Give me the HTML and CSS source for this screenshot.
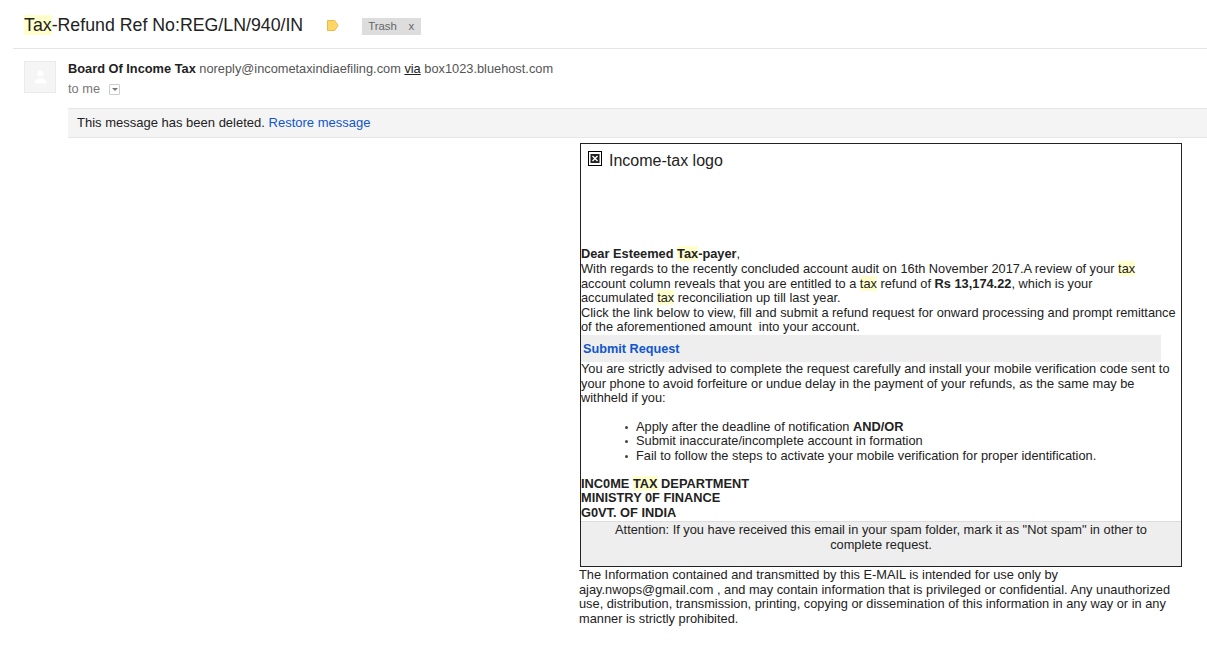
FILE: index.html
```html
<!DOCTYPE html>
<html lang="en">
<head>
<meta charset="utf-8">
<title>Tax-Refund Ref No:REG/LN/940/IN</title>
<link rel="stylesheet" href="styles.css">
</head>
<body>
<header class="subject">
  <h1 class="subject-title"><mark class="hl">Tax</mark>-Refund Ref No:REG/LN/940/IN</h1>
  <svg class="label-icon" width="13" height="11" viewBox="0 0 13 11"><path d="M1.500 .5h7.200l3.300 5-3.300 5H1.500z" fill="#fdd663" stroke="#efb94a"/></svg>
  <span class="trash-tag"><span>Trash</span><span>x</span></span>
</header>
<section class="sender">
  <div class="avatar">
    <svg width="13" height="14" viewBox="0 0 13 14"><circle cx="6.500" cy="3.500" r="3" fill="#fff"/><path d="M.5 13.500c0-3.500 2.500-5 6-5s6 1.500 6 5z" fill="#fff"/></svg>
  </div>
  <div class="sender-text">
    <div class="sender-line"><b class="sender-name">Board Of Income Tax</b> noreply@incometaxindiaefiling.com <u class="via">via</u> box1023.bluehost.com</div>
    <div class="to-line">to me <span class="to-menu"><svg width="6" height="3" viewBox="0 0 6 3"><path d="M0 0h6L3 3z" fill="#777"/></svg></span></div>
  </div>
</section>
<div class="notice">This message has been deleted. <a class="restore" href="#">Restore message</a></div>
<main class="message">
  <div class="mail-box">
    <div class="logo">
      <svg class="broken" width="14" height="15" viewBox="0 0 14 15"><rect x=".5" y=".5" width="13" height="14" fill="#fff" stroke="#000"/><rect x="2.500" y="3" width="9" height="9" fill="#222"/><path d="M4.500 5l5 5M9.500 5l-5 5" stroke="#fff" stroke-width="1.400"/></svg>
      <span class="logo-alt">Income-tax logo</span>
    </div>
    <div class="mail-text">
      <b>Dear Esteemed <mark class="hl">Tax</mark>-payer</b>,<br>
      With regards to the recently concluded account audit on 16th November 2017.A review of your <mark class="hl">tax</mark><br>
      account column reveals that you are entitled to a <mark class="hl">tax</mark> refund of <b>Rs 13,174.22</b>, which is your<br>
      accumulated <mark class="hl">tax</mark> reconciliation up till last year.<br>
      Click the link below to view, fill and submit a refund request for onward processing and prompt remittance<br>
      of the aforementioned amount&nbsp; into your account.
    </div>
    <div class="submit-bar"><a class="submit-link" href="#">Submit Request</a></div>
    <div class="mail-text">
      You are strictly advised to complete the request carefully and install your mobile verification code sent to<br>
      your phone to avoid forfeiture or undue delay in the payment of your refunds, as the same may be<br>
      withheld if you:
    </div>
    <ul class="mail-list">
      <li>Apply after the deadline of notification&nbsp;<b>AND/OR</b></li>
      <li>Submit inaccurate/incomplete account in formation</li>
      <li>Fail to follow the steps to activate your mobile verification for proper identification.</li>
    </ul>
    <div class="mail-text dept">
      INC0ME <mark class="hl">TAX</mark> DEPARTMENT<br>
      MINISTRY 0F FINANCE<br>
      G0VT. OF INDIA
    </div>
    <div class="attention">Attention: If you have received this email in your spam folder, mark it as "Not spam" in other to<br>complete request.</div>
  </div>
  <p class="disclaimer">The Information contained and transmitted by this E-MAIL is intended for use only by<br>
  ajay.nwops@gmail.com , and may contain information that is privileged or confidential. Any unauthorized<br>
  use, distribution, transmission, printing, copying or dissemination of this information in any way or in any<br>
  manner is strictly prohibited.</p>
</main>
</body>
</html>
```
FILE: styles.css
```css
html, body { margin: 0; padding: 0; background: #fff; }
body { font-family: "Liberation Sans", Arial, sans-serif; color: #222; overflow: hidden; }
.hl { background: #ffffcc; color: inherit; }
.subject { display: flex; align-items: center; height: 46px; margin-left: 13px; padding: 2px 0 0 11px; border-bottom: 1px solid #e5e5e5; }
.subject-title { margin: 0; font-size: 17.750px; font-weight: 400; line-height: 24px; }
.label-icon { margin-left: 23px; }
.trash-tag { display: flex; justify-content: space-between; width: 59px; height: 17px; margin: 2px 0 0 23px; padding: 0 7px 0 6px; box-sizing: border-box; background: #ddd; color: #666; font-size: 11.400px; line-height: 17px; }
.sender { display: flex; margin-top: 12px; margin-left: 24px; }
.avatar { display: flex; align-items: center; justify-content: center; width: 32px; height: 32px; box-sizing: border-box; background: #f5f5f5; border: 1px solid #ebebeb; }
.sender-text { margin-left: 12px; }
.sender-line { font-size: 12.800px; line-height: 16px; color: #555; }
.sender-name { color: #222; }
.via { color: #222; }
.to-line { display: flex; align-items: center; margin-top: 4px; font-size: 12.800px; line-height: 16px; color: #777; }
.to-menu { display: flex; align-items: center; justify-content: center; width: 9px; height: 9px; margin-left: 9px; border: 1px solid #ccc; border-radius: 1px; }
.notice { height: 28px; margin: 11px 0 0 68px; padding-left: 9px; background: #f4f4f4; border-top: 1px solid #e6e6e6; border-bottom: 1px solid #e6e6e6; font-size: 13px; line-height: 27px; }
.restore { color: #1155cc; text-decoration: none; }
.message { margin-left: 579px; width: 603px; margin-top: 5px; }
.mail-box { width: 602px; height: 424px; margin-left: 1px; box-sizing: border-box; border: 1px solid #222; display: flex; flex-direction: column; }
.logo { display: flex; align-items: flex-start; height: 103.400px; padding: 7px 0 0 7px; box-sizing: border-box; flex: none; }
.logo-alt { margin-left: 7px; font-size: 16px; line-height: 19px; }
.mail-text { font-size: 12.800px; line-height: 14.600px; }
.submit-bar { width: 580px; height: 27px; flex: none; background: #eeeeee; padding-left: 2px; box-sizing: border-box; line-height: 25px; }
.submit-link { font-size: 12.700px; font-weight: 700; color: #1155cc; text-decoration: none; }
.mail-list { margin: 14px 0 0; padding: 0 0 0 44px; list-style: none; font-size: 12.800px; line-height: 14.600px; }
.mail-list li { display: flex; align-items: center; white-space: pre; }
.mail-list li::before { content: ""; flex: none; width: 3px; height: 3px; margin-right: 8px; border-radius: 50%; background: #444; }
.dept { margin-top: 13px; font-weight: 700; }
.attention { flex: 1; margin-top: 1px; background: #eee; border-top: 1px solid #ddd; text-align: center; font-size: 12.800px; line-height: 15px; }
.disclaimer { margin: 1px 0 0; font-size: 12.800px; line-height: 14.600px; }
```
